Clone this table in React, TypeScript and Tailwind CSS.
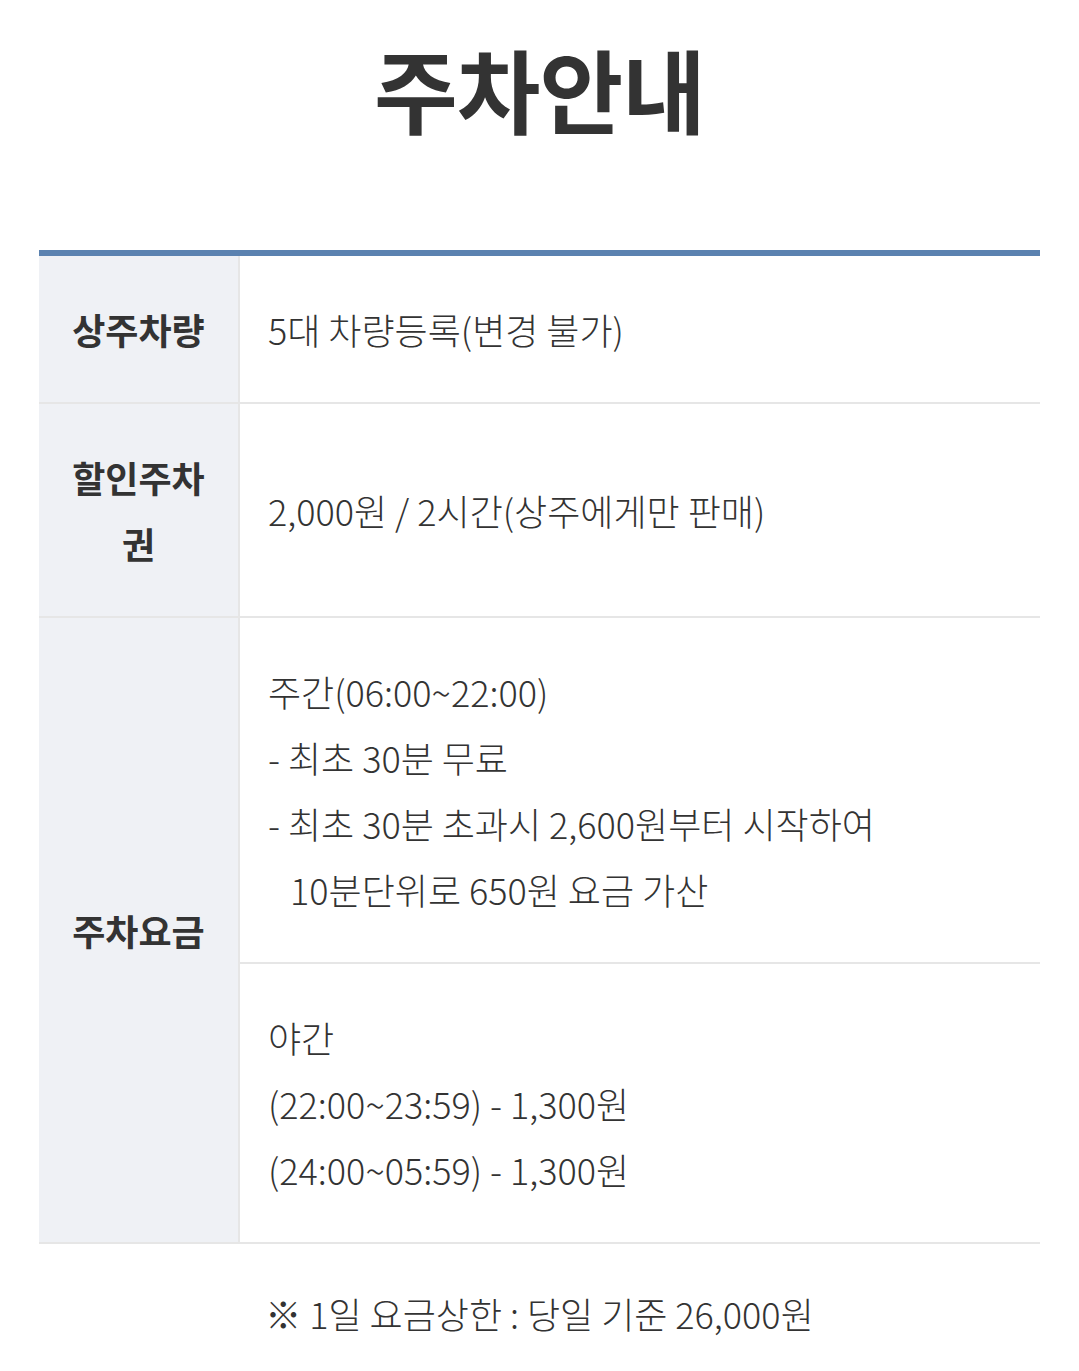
import React from 'react';

const rows = [
  { label: '상주차량', lines: ['5대 차량등록(변경 불가)'] },
  { label: '할인주차권', lines: ['2,000원 / 2시간(상주에게만 판매)'] },
];

const ParkingInfo = () => {
  return (
    <div
      className="w-[1079px] bg-white text-[#333]"
      style={{ fontFamily: '"Noto Sans CJK KR", "Noto Sans", sans-serif' }}
    >
      <h1 className="pt-[27px] text-center text-[91px] font-bold leading-[120px] tracking-[-1px]">
        주차안내
      </h1>

      <div className="mx-[39px] mt-[103px] border-t-[6px] border-[#5b82b0]">
        {rows.map((row) => (
          <div key={row.label} className="flex border-b-2 border-[#e6e6e6]">
            <div className="flex w-[201px] shrink-0 items-center justify-center border-r-2 border-[#e6e6e6] bg-[#eff1f5] px-[28px] py-[40px] text-center text-[36px] font-bold leading-[66px]">
              {row.label}
            </div>
            <div className="flex flex-1 items-center py-[40px] pl-[28px] text-[36px] font-light leading-[66px]">
              {row.lines.map((l) => (
                <div key={l}>{l}</div>
              ))}
            </div>
          </div>
        ))}

        <div className="flex border-b-2 border-[#e6e6e6]">
          <div className="flex w-[201px] shrink-0 items-center justify-center border-r-2 border-[#e6e6e6] bg-[#eff1f5] text-[36px] font-bold leading-[66px]">
            주차요금
          </div>
          <div className="flex-1 text-[36px] font-light leading-[66px]">
            <div className="border-b-2 border-[#e6e6e6] py-[40px] pl-[28px]">
              <div>주간(06:00~22:00)</div>
              <div>- 최초 30분 무료</div>
              <div>- 최초 30분 초과시 2,600원부터 시작하여</div>
              <div className="pl-[22px]">10분단위로 650원 요금 가산</div>
            </div>
            <div className="py-[40px] pl-[28px]">
              <div>야간</div>
              <div>(22:00~23:59) - 1,300원</div>
              <div>(24:00~05:59) - 1,300원</div>
            </div>
          </div>
        </div>
      </div>

      <p className="pt-[36px] pb-[20px] text-center text-[36px] font-light leading-[66px]">
        ※ 1일 요금상한 : 당일 기준 26,000원
      </p>
    </div>
  );
};

export default function App() {
  return <ParkingInfo />;
}
